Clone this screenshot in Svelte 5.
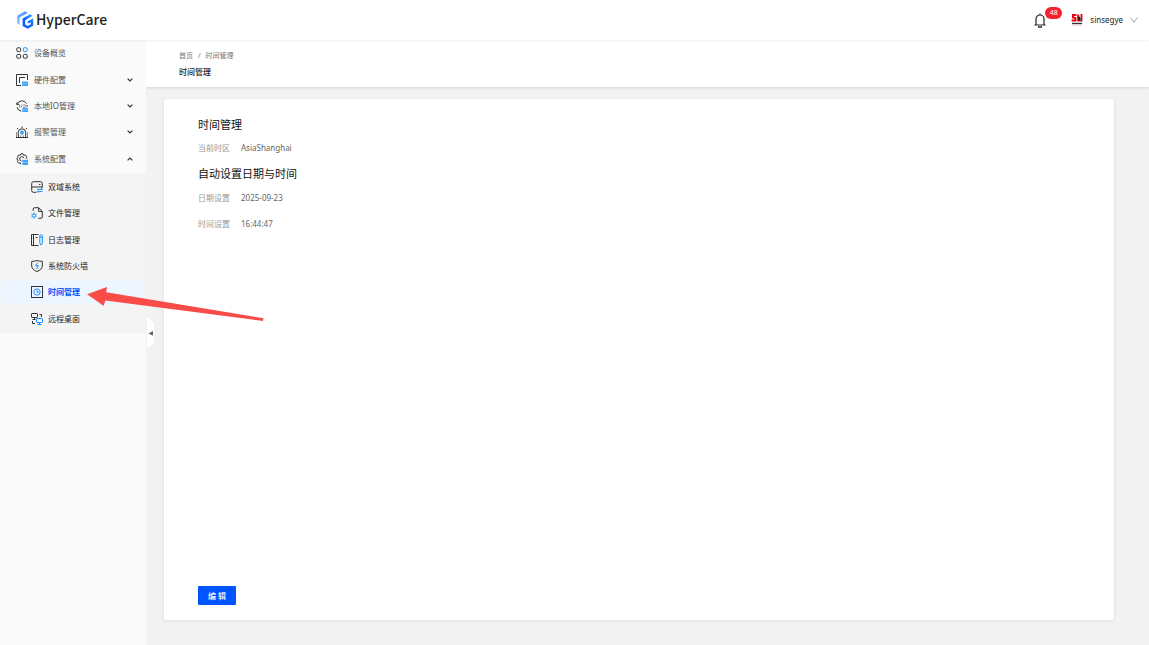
<script>
  const topMenu = [
    { id: 'overview', label: '设备概览' },
    { id: 'hardware', label: '硬件配置', arrow: 'down' },
    { id: 'io', label: '本地IO管理', arrow: 'down' },
    { id: 'alarm', label: '报警管理', arrow: 'down' },
    { id: 'system', label: '系统配置', arrow: 'up' }
  ];
  const subMenu = [
    { id: 'dual', label: '双域系统' },
    { id: 'file', label: '文件管理' },
    { id: 'log', label: '日志管理' },
    { id: 'firewall', label: '系统防火墙' },
    { id: 'time', label: '时间管理' },
    { id: 'remote', label: '远程桌面' }
  ];
  let active = $state('time');
</script>

{#snippet icon(id)}
  <svg class="icon" viewBox="0 0 12 12" aria-hidden="true">
    {#if id === 'overview'}
      <rect x="0.8" y="0.8" width="3.8" height="3.8" rx="0.9" />
      <rect class="blue" x="7.4" y="0.8" width="3.8" height="3.8" rx="0.9" />
      <rect x="0.8" y="7.4" width="3.8" height="3.8" rx="0.9" />
      <rect x="7.4" y="7.4" width="3.8" height="3.8" rx="0.9" />
    {:else if id === 'hardware'}
      <path d="M11.5 6V0.5H0.5V11.5H5" />
      <path d="M9 3.5H3.5V9" />
      <path class="fill" d="M6 7.6H12V12H6z" />
      <path class="cut" d="M6 9.8H12" />
    {:else if id === 'io'}
      <path d="M1 4.6A5.2 5.2 0 0 1 10.6 3.6M0.7 2.6L1 4.8L3 4.2M1 7.2A5.2 5.2 0 0 0 5.2 11.2M11.2 5V6.6" />
      <path class="thin" d="M3.6 4.6V7.4M5 7.4L6 4.6M7.2 5.2A1.4 1.4 0 1 1 7.2 7" />
      <path class="fill" d="M6.4 7.8H12V12H6.4z" />
      <path class="cut" d="M6.4 9.9H12" />
    {:else if id === 'alarm'}
      <path d="M0 11.5H12M2.3 11V6.4A3.7 3.6 0 0 1 9.7 6.4V11M6 0.4V2M1 2L2.2 3.2M11 2L9.8 3.2" />
      <path class="thin" d="M0.4 6V11M11.6 6V11M4.6 9.4V11M7.4 9.4V11" />
      <path class="fill" d="M6 4.4L7.8 5.2V7Q7.6 8.4 6 9Q4.4 8.4 4.2 7V5.2z" />
    {:else if id === 'system'}
      <path d="M4.9 11.2L4.4 9.9L2.7 10.2L1.4 8.5L2.2 7.2L0.6 6L2 4.6L1.5 3.3L2.8 1.9L4.3 2.3L5 0.7H7L7.7 2.3L9.2 1.9L10.5 3.3L10 4.6L11.4 5.6" />
      <path d="M8 5.2A2.2 2.2 0 1 0 5.6 8.1" />
      <path class="fill" d="M6.4 6.8H12V12H6.4z" />
      <path class="cut" d="M6.4 9.3H12" />
    {:else if id === 'dual'}
      <path d="M11.3 6.6V2.4Q11.3 0.7 9.6 0.7H2.4Q0.7 0.7 0.7 2.4V9.6Q0.7 11.3 2.4 11.3H5.4M0.7 6H11.3M8 3.5H9.4" />
      <path class="blue" d="M6 8.4H11.6L10 7.2M11.6 10.4H6.2L7.8 11.6" />
    {:else if id === 'file'}
      <path d="M2.2 3.8V2Q2.2 0.7 3.5 0.7H7.6L11.3 4.4V10Q11.3 11.3 10 11.3H7.4M7.6 0.7V4.4H11.3" />
      <circle class="blue" cx="3" cy="8.6" r="1.7" />
      <path class="blue" d="M3 5.6V6.9M3 10.3V11.6M0.4 7.1L1.5 7.7M4.5 9.5L5.6 10.1M0.4 10.1L1.5 9.5M4.5 7.7L5.6 7.1" />
    {:else if id === 'log'}
      <path d="M7.6 11.5H0.5V0.5H7.6M2.5 0.5V11.5M4.6 3.5H6.6" />
      <path class="blue" d="M8.8 1.4Q10.1 0 11.4 1.4V9L10.1 11.2L8.8 9zM8.8 3.2H11.4" />
    {:else if id === 'firewall'}
      <path d="M6 0.5Q8 1.3 11.3 1.4V6Q11 9.8 6 11.5Q1 9.8 0.7 6V1.4Q4 1.3 6 0.5z" />
      <path class="blue" d="M6.6 2.8L4.4 5.8H7.5L5.4 9" />
    {:else if id === 'time'}
      <rect x="0.5" y="0.5" width="11" height="11" />
      <circle class="blue" cx="6" cy="6" r="3.2" />
      <path class="blue" d="M6 4.2V6.3H7.8" />
    {:else}
      <rect x="0.5" y="0.5" width="6" height="4" rx="0.6" />
      <path d="M3.5 4.5V6.5M1.5 6.5H4.5M8.4 1.5H10.5V4M1.5 8V10.5H4" />
      <rect class="blue" x="5.5" y="5.5" width="6" height="4" rx="0.6" />
      <path class="blue" d="M8.5 9.5V11.5M6.4 11.5H10.6" />
    {/if}
  </svg>
{/snippet}

<div class="page">
  <header class="topbar">
    <a class="brand" href="#home">
      <svg class="logo" viewBox="0 0 17 18" aria-hidden="true">
        <defs>
          <linearGradient id="pale" x1="0" y1="0" x2="0" y2="1">
            <stop offset="0" stop-color="#4d94ff" />
            <stop offset="1" stop-color="#9cc4ff" />
          </linearGradient>
          <linearGradient id="deep" x1="1" y1="0" x2="0.4" y2="1">
            <stop offset="0" stop-color="#3fb0ff" />
            <stop offset="0.6" stop-color="#0a62ff" />
          </linearGradient>
        </defs>
        <path fill="url(#pale)" d="M0.2 4.8L8 0.3L10.8 1.9L2.6 6.6V14L0.2 12.5z" />
        <path fill="url(#deep)" d="M5.6 7.6L13 3.2L15.6 4.8L8.2 9.2V13.6L10.8 15L13.8 13.2V11.2L10.8 12.6V10.2L16.2 7.2V14.4L10.8 17.8L5.6 14.9z" />
      </svg>
      <span>HyperCare</span>
    </a>
    <div class="account">
      <button class="bell" aria-label="通知">
        <svg viewBox="0 0 12 15" aria-hidden="true">
          <path d="M6 0.4V2M2 11.8V6A4 4 0 0 1 10 6V11.8M0.4 12H11.6M4.6 13V14.2H7.4V13" />
        </svg>
        <span class="count">48</span>
      </button>
      <button class="user">
        <svg class="avatar" viewBox="0 0 12 14" aria-hidden="true">
          <path fill="#e60012" d="M1 1H5.4V3H3.2V4H5.4V8.4H0.6V6.4H3.2V5.4H1zM6.2 1.6H8.2V8.4H6.2zM9.6 1H11.4V8.4H9.6z" />
          <path fill="#222" d="M7 3.4H8.4L9.6 5V8.4H8.6L7 6z" />
          <path fill="#333" d="M1 9.8H11V11.2H1z" />
          <path fill="#fbdcdc" d="M1 12H11V13H1z" />
        </svg>
        <span>sinsegye</span>
        <svg class="caret" viewBox="0 0 8 6" aria-hidden="true"><path d="M0.6 0.6L4 5.2L7.4 0.6" /></svg>
      </button>
    </div>
  </header>

  <div class="body">
    <nav class="sidebar">
      <ul class="menu">
        {#each topMenu as item}
          <li>
            <button class="row">
              {@render icon(item.id)}
              <span class="label">{item.label}</span>
              {#if item.arrow}
                <svg class="chevron" class:up={item.arrow === 'up'} viewBox="0 0 6 4" aria-hidden="true"><path d="M0.6 0.6L3 3L5.4 0.6" /></svg>
              {/if}
            </button>
          </li>
        {/each}
      </ul>
      <ul class="menu sub">
        {#each subMenu as item}
          <li>
            <button class="row" class:active={active === item.id} onclick={() => (active = item.id)}>
              {@render icon(item.id)}
              <span class="label">{item.label}</span>
            </button>
          </li>
        {/each}
      </ul>
      <button class="collapse" aria-label="收起菜单">
        <svg viewBox="0 0 8 32" aria-hidden="true">
          <path fill="#fff" d="M0 0L7 6V26L0 32z" />
          <path fill="#666" d="M1.4 16.4L6 14V18.8z" />
        </svg>
      </button>
    </nav>

    <main>
      <div class="pagehead">
        <div class="crumbs"><a href="#home">首页</a><span>/</span><span>时间管理</span></div>
        <h1>时间管理</h1>
      </div>
      <section class="card">
        <h2>时间管理</h2>
        <dl>
          <div><dt>当前时区</dt><dd>AsiaShanghai</dd></div>
        </dl>
        <h2>自动设置日期与时间</h2>
        <dl>
          <div><dt>日期设置</dt><dd>2025-09-23</dd></div>
          <div><dt>时间设置</dt><dd>16:44:47</dd></div>
        </dl>
        <button class="edit">编 辑</button>
      </section>
    </main>
  </div>

  <svg class="pointer" viewBox="0 0 178 36" aria-hidden="true">
    <path fill="#f94b47" d="M0 7.3L20 0L19.2 5.2L176.5 31.2L176 34L18.4 13.6L16.5 18.8z" />
  </svg>
</div>

<style>
  :global(body) {
    margin: 0;
  }
  .page {
    position: relative;
    display: flex;
    flex-direction: column;
    min-height: 100vh;
    font-family: 'Noto Sans', 'Noto Sans CJK SC', sans-serif;
    font-size: 8px;
    line-height: 12px;
    color: #333;
    background: #f2f2f2;
  }
  button {
    padding: 0;
    border: 0;
    background: none;
    font: inherit;
    color: inherit;
    cursor: pointer;
  }
  a {
    color: inherit;
    text-decoration: none;
  }
  svg {
    display: block;
    flex: none;
    fill: none;
  }
  .topbar {
    position: relative;
    z-index: 2;
    display: flex;
    align-items: center;
    justify-content: space-between;
    box-sizing: border-box;
    height: 40px;
    padding: 0 11px 0 17px;
    background: #fff;
    box-shadow: 0 0 3px rgba(0, 0, 0, 0.12);
  }
  .brand {
    display: flex;
    align-items: center;
    gap: 2px;
    font-family: 'Noto Sans CJK SC', sans-serif;
    font-size: 14px;
    font-weight: 500;
    line-height: 18px;
    color: #222;
  }
  .brand span {
    padding-bottom: 3px;
  }
  .logo {
    width: 17px;
    height: 18px;
  }
  .account,
  .user {
    display: flex;
    align-items: center;
  }
  .account {
    gap: 25px;
  }
  .bell {
    position: relative;
  }
  .bell svg {
    width: 12px;
    height: 15px;
    stroke: #222;
    stroke-width: 1.2;
  }
  .count {
    position: absolute;
    left: 11px;
    top: -6px;
    width: 17px;
    border-radius: 6px;
    background: #f5222d;
    color: #fff;
    font-size: 7px;
    text-align: center;
  }
  .user {
    gap: 7px;
    color: #222;
  }
  .avatar {
    width: 12px;
    height: 14px;
  }
  .caret {
    width: 8px;
    height: 6px;
    stroke: #888;
    stroke-width: 0.8;
  }
  .body {
    display: flex;
    flex: 1;
  }
  .sidebar {
    position: relative;
    box-sizing: border-box;
    width: 146px;
    flex: none;
    background: #fafafa;
  }
  .menu {
    display: grid;
    grid-auto-rows: 1fr;
    box-sizing: border-box;
    height: 133px;
    margin: 0;
    padding: 0 0 1px;
    list-style: none;
  }
  .menu li {
    display: flex;
    padding: 1px 2px;
  }
  .row {
    display: flex;
    align-items: center;
    gap: 6px;
    width: 100%;
    padding: 0 11px 0 14px;
    border-radius: 4px;
    color: #555;
    text-align: left;
  }
  .label {
    flex: 1;
  }
  .sub {
    height: 160px;
    padding: 1px 0;
    background: #f4f4f4;
  }
  .sub .row {
    gap: 5px;
    padding-left: 29px;
    color: #222;
  }
  .sub .row.active {
    background: #edf6ff;
    color: #0055ff;
    font-weight: 700;
  }
  .icon {
    width: 12px;
    height: 12px;
    stroke: #333;
    stroke-width: 1;
  }
  .icon .blue {
    stroke: #1e90ff;
  }
  .icon .thin {
    stroke-width: 0.6;
  }
  .icon .fill {
    fill: #3da2ff;
    stroke: none;
  }
  .icon .cut {
    stroke: #a9d6ff;
    stroke-width: 0.6;
  }
  .chevron {
    width: 6px;
    height: 4px;
    stroke: #333;
    stroke-width: 1.2;
  }
  .chevron.up {
    transform: rotate(180deg);
  }
  .collapse {
    position: absolute;
    left: 147px;
    top: 277px;
  }
  .collapse svg {
    width: 8px;
    height: 32px;
  }
  main {
    display: flex;
    flex: 1;
    flex-direction: column;
    min-width: 0;
  }
  .pagehead {
    padding: 10px 33px 9px;
    background: #fff;
    box-shadow: 0 1px 3px rgba(0, 0, 0, 0.12);
  }
  .crumbs {
    display: flex;
    gap: 5px;
    font-size: 7px;
    color: #777;
  }
  h1 {
    margin: 4px 0 0;
    font-size: 8px;
    font-weight: 500;
    color: #222;
  }
  .card {
    display: flex;
    flex: 1;
    flex-direction: column;
    align-items: flex-start;
    margin: 12px 35px 25px 18px;
    padding: 18px 34px 15px;
    border-radius: 2px;
    background: #fff;
    box-shadow: 0 1px 4px rgba(0, 0, 0, 0.08);
  }
  h2 {
    margin: 0;
    font-size: 11px;
    font-weight: 400;
    line-height: 16px;
    color: #111;
  }
  dl {
    display: grid;
    gap: 14px;
    margin: 9px 0 12px;
  }
  dl + h2 + dl {
    margin-top: 10px;
  }
  dl div {
    display: flex;
    gap: 11px;
  }
  dt {
    color: #999;
  }
  dd {
    margin: 0;
    color: #666;
  }
  .edit {
    margin-top: auto;
    width: 38px;
    height: 19px;
    border-radius: 1px;
    background: #0055ff;
    color: #fff;
    font-weight: 500;
  }
  .pointer {
    position: absolute;
    z-index: 3;
    left: 87px;
    top: 287px;
    width: 178px;
    height: 36px;
    pointer-events: none;
  }
</style>
